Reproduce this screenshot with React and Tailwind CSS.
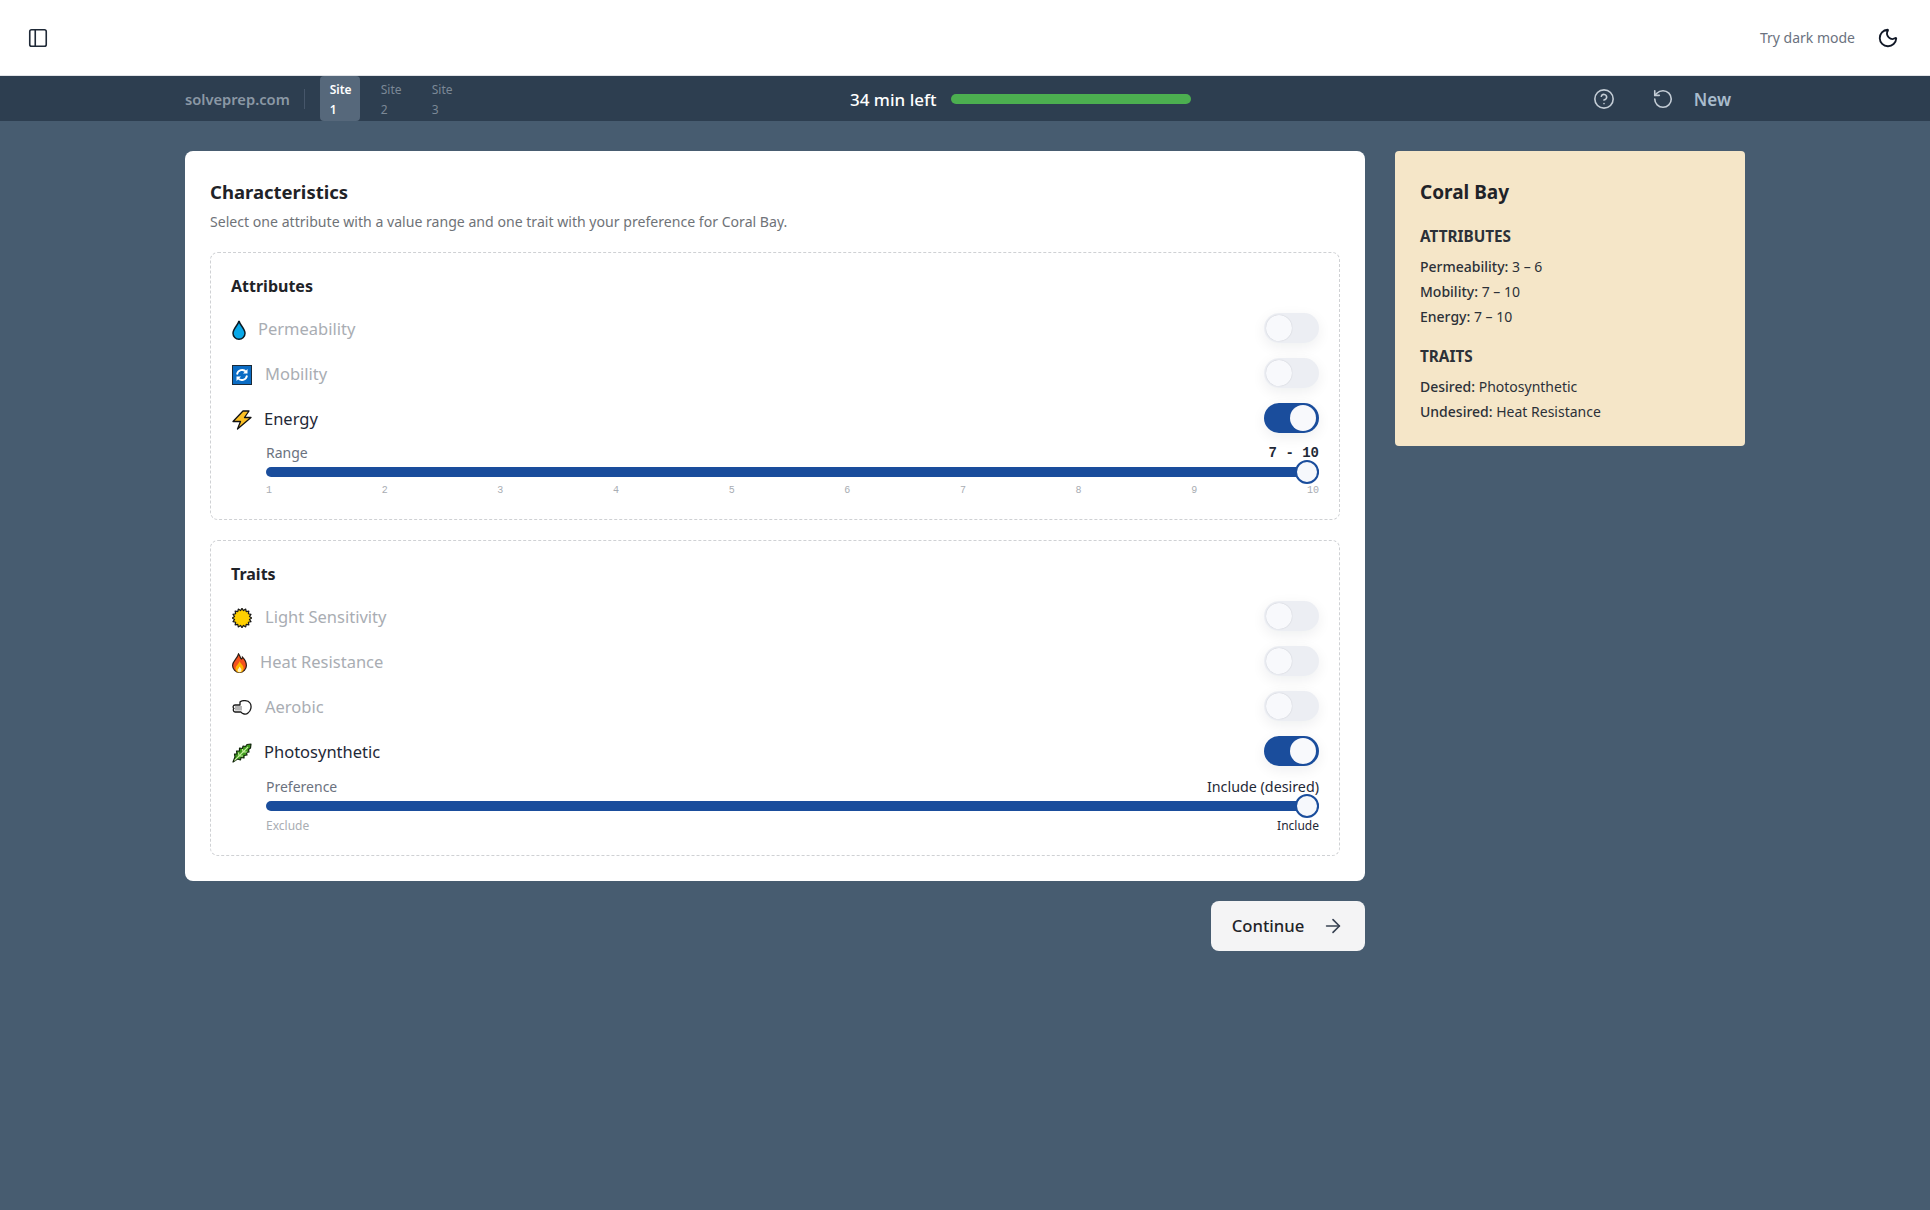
import { ArrowRight, CircleHelp, Moon, PanelLeft, RotateCcw } from "lucide-react";

const FONT = "font-['Noto_Sans','Open_Sans',sans-serif]";

const sunPoints = Array.from({ length: 32 }, (_, i) => {
  const r = i % 2 === 0 ? 9.7 : 7.6;
  const a = (i * Math.PI) / 16;
  return `${(10 + r * Math.sin(a)).toFixed(2)},${(10 - r * Math.cos(a)).toFixed(2)}`;
}).join(" ");

const Drop = () => (
  <svg viewBox="0 0 14 20" className="h-5 w-[14px] shrink-0">
    <path d="M7 1 C8 5 13 9 13 13.2 A6 6 0 0 1 1 13.2 C1 9 6 5 7 1 Z" fill="#08a8e8" stroke="#0b1a24" strokeWidth="1.5" />
  </svg>
);

const Cycle = () => (
  <svg viewBox="0 0 20 20" className="h-5 w-5 shrink-0">
    <rect x="0.5" y="0.5" width="19" height="19" fill="#0a6cc4" stroke="#1b2a38" />
    <path d="M5 9.5 A5.2 5.2 0 0 1 14.2 7" fill="none" stroke="#fff" strokeWidth="1.8" />
    <path d="M15 10.5 A5.2 5.2 0 0 1 5.8 13" fill="none" stroke="#fff" strokeWidth="1.8" />
    <path d="M15.5 4 V8.5 H11 Z M4.5 16 V11.5 H9 Z" fill="#fff" />
  </svg>
);

const Bolt = () => (
  <svg viewBox="0 0 20 20" className="h-5 w-5 shrink-0">
    <path d="M11 1 H17 L12.5 7.5 H19 L5.5 19 L8.5 11.5 H1 Z" fill="#fbbf24" stroke="#111" strokeWidth="1.3" strokeLinejoin="round" />
  </svg>
);

const Sun = () => (
  <svg viewBox="0 0 20 20" className="h-5 w-5 shrink-0">
    <polygon points={sunPoints} fill="#ffd000" stroke="#1a1a1a" strokeWidth="1.2" strokeLinejoin="round" />
  </svg>
);

const Flame = () => (
  <svg viewBox="0.4 0 15.2 20" className="h-5 w-[15px] shrink-0">
    <path d="M7 0.8 C9 3 8.5 5 10 6 C11 5.5 11 4.5 11 4 C14 7 15 9.5 15 12.5 A7 7 0 0 1 1 12.5 C1 8 6 5.5 7 0.8 Z" fill="#f4511e" stroke="#2a1a12" strokeWidth="1.2" />
    <path d="M8 8 C9 11 12.5 12.5 12 15.5 A4 4 0 0 1 4 15.5 C4 13 7.5 11 8 8 Z" fill="#ffb300" />
    <path d="M8 13.5 C9 15 10.3 16 10 17.3 A2 2 0 0 1 6 17.3 C6 16 7.6 15.5 8 13.5 Z" fill="#fff3c4" />
  </svg>
);

const Air = () => (
  <svg viewBox="0 0 20 15" className="h-[15px] w-5 shrink-0">
    <path d="M8 2 C10 0 16 0 18 3 C20 6 19 11 16 13 C14 15 10 14 9 12 L3 12 C1 12 1 9 2 8.5 C0.5 7.5 1 5 3 5 L8 5 Z" fill="#fff" stroke="#1a1a1a" strokeWidth="1.3" strokeLinejoin="round" />
    <rect x="3" y="6" width="7" height="4.5" fill="#b5b5b5" />
  </svg>
);

const Leaf = () => (
  <svg viewBox="0 0 20 20" className="h-5 w-5 shrink-0">
    <path d="M1 19 L3 14 L2.5 11 L5 11 L4.5 8 L7.5 8 L7.5 5 L10.5 5.5 L11 3 L13.5 3.5 L15 1.5 L19 1 L18.5 5 L16.5 6.5 L17 9 L14.5 9.5 L15 12 L12 12.5 L12 15 L9 14.5 L8.5 17 L5.5 16 Z" fill="#3f9b1e" stroke="#10240a" strokeWidth="1.2" strokeLinejoin="round" />
    <path d="M2.5 17.5 L16 4 M7 13 L6.5 9.5 M7 13 L11 13 M11 9 L10.5 6 M11 9 L15 9" fill="none" stroke="#c6ef9e" strokeWidth="1.1" />
  </svg>
);

const Toggle = ({ on }) => (
  <div
    className={`mb-[3px] flex h-[30px] w-[55px] items-center rounded-full shadow-[0_4px_14px_rgba(15,23,42,0.07)] ${
      on ? "justify-end bg-[#1a4d9c] pr-[3px]" : "justify-start bg-[#eceef3] pl-[2px]"
    }`}
  >
    <div className={`h-[26px] w-[26px] rounded-full bg-[#f8f9fc] ${on ? "" : "shadow-[0_0_1px_rgba(15,23,42,0.25)]"}`} />
  </div>
);

const Row = ({ icon, label, on, gap }) => (
  <div className="flex h-[45px] items-center justify-between">
    <div className={`flex items-center ${gap}`}>
      {icon}
      <span className={`text-[16.5px] ${on ? "text-[#1f2937]" : "text-[#a9adb3]"}`}>{label}</span>
    </div>
    <Toggle on={on} />
  </div>
);

const Track = () => (
  <div className="relative h-[10px] rounded-full bg-[#1a4d9c]">
    <div className="absolute right-0 top-1/2 h-6 w-6 -translate-y-1/2 rounded-full border-2 border-[#1a4d9c] bg-[#f6f8fc]" />
  </div>
);

const RangeSlider = () => (
  <div className="mt-px ml-[34px]">
    <div className="flex h-[19px] items-center justify-between">
      <span className="text-sm text-[#6b7280]">Range</span>
      <span className="font-['Liberation_Mono',monospace] text-sm font-bold text-[#1f2937]">7 - 10</span>
    </div>
    <div className="mt-[5px]">
      <Track />
    </div>
    <div className="mt-[7px] flex justify-between font-['Liberation_Mono',monospace] text-[10px] leading-[14px] text-[#a9adb3]">
      {[1, 2, 3, 4, 5, 6, 7, 8, 9, 10].map((n) => (
        <span key={n}>{n}</span>
      ))}
    </div>
  </div>
);

const PrefSlider = () => (
  <div className="mt-[2px] ml-[34px]">
    <div className="flex h-[19px] items-center justify-between">
      <span className="text-sm text-[#6b7280]">Preference</span>
      <span className="text-[14.3px] text-[#1f2937]">Include (desired)</span>
    </div>
    <div className="mt-[5px]">
      <Track />
    </div>
    <div className="mt-[7px] flex justify-between text-xs leading-[16px]">
      <span className="text-[#a9adb3]">Exclude</span>
      <span className="text-[#1f2937]">Include</span>
    </div>
  </div>
);

const Section = ({ title, children, className }) => (
  <section className={`rounded-lg border border-dashed border-[#cfd1d4] pt-[21px] pr-5 pl-[21px] ${className}`}>
    <h3 className="mb-[9px] -ml-px text-base leading-6 font-bold text-[#1f2328]">{title}</h3>
    {children}
  </section>
);

const App = () => (
  <div className={`min-h-[1210px] bg-[#475c70] ${FONT}`}>
    {/* top bar */}
    <header className="flex h-[76px] items-center justify-between border-b border-[#e2e4e8] bg-white pr-[31px] pl-[27px]">
      <PanelLeft className="h-[22px] w-[22px] text-[#1f2937]" strokeWidth={1.75} />
      <div className="flex items-center gap-[22px]">
        <span className="text-sm text-[#6b7280]">Try dark mode</span>
        <Moon className="h-[22px] w-[22px] text-[#111827]" strokeWidth={2} />
      </div>
    </header>

    {/* exam bar */}
    <div className="flex h-[45px] items-center bg-[#2d3e50] pr-[199px] pl-[185px]">
      <div className="flex h-full w-[665px] items-center">
        <span className="pt-[2px] text-[14.7px] font-semibold text-[#8b98a5]">solveprep.com</span>
        <div className="mr-[15px] ml-[14px] h-5 w-px bg-[#46566a]" />
        <div className="flex h-full items-center gap-[11px] text-xs">
          <div className="flex h-full w-10 flex-col justify-center rounded bg-[#56687b] pt-[3px] pl-[10px] leading-5 font-semibold text-white">
            <span>Site</span>
            <span>1</span>
          </div>
          <div className="flex w-10 flex-col pt-[3px] pl-[10px] leading-5 text-[#7b8896]">
            <span>Site</span>
            <span>2</span>
          </div>
          <div className="flex w-10 flex-col pt-[3px] pl-[10px] leading-5 text-[#7b8896]">
            <span>Site</span>
            <span>3</span>
          </div>
        </div>
      </div>
      <div className="flex items-center gap-[14px]">
        <span className="pt-[2px] text-[17px] font-medium text-white">34 min left</span>
        <div className="h-[10px] w-[240px] rounded-full bg-[#4caf50]" />
      </div>
      <div className="ml-auto flex items-center">
        <CircleHelp className="h-[22px] w-[22px] text-[#c3ccd5]" strokeWidth={1.75} />
        <RotateCcw className="ml-[37px] h-[22px] w-[22px] text-[#c3ccd5]" strokeWidth={1.75} />
        <span className="ml-[20px] pt-[2px] text-[17px] font-semibold text-[#a9bccd]">New</span>
      </div>
    </div>

    <main className="flex items-start gap-[30px] pt-[30px] pl-[185px]">
      <div className="w-[1180px]">
        <div className="rounded-lg bg-white px-[25px] pt-[29px] pb-[25px]">
          <h2 className="text-[18.5px] leading-6 font-bold text-[#1f2328]">Characteristics</h2>
          <p className="mt-[8px] text-[14.1px] leading-5 text-[#6f7378]">
            Select one attribute with a value range and one trait with your preference for Coral Bay.
          </p>
          <Section title="Attributes" className="mt-5 h-[268px]">
            <Row icon={<Drop />} label="Permeability" gap="gap-[12px]" />
            <Row icon={<Cycle />} label="Mobility" gap="gap-[13px]" />
            <Row icon={<Bolt />} label="Energy" on gap="gap-[12px]" />
            <RangeSlider />
          </Section>
          <Section title="Traits" className="mt-5 h-[316px]">
            <Row icon={<Sun />} label="Light Sensitivity" gap="gap-[13px]" />
            <Row icon={<Flame />} label="Heat Resistance" gap="gap-[13px]" />
            <Row icon={<Air />} label="Aerobic" gap="gap-[13px]" />
            <Row icon={<Leaf />} label="Photosynthetic" on gap="gap-[12px]" />
            <PrefSlider />
          </Section>
        </div>
        <div className="mt-5 flex justify-end">
          <button className="flex h-[50px] w-[154px] items-center justify-center gap-[18px] rounded-lg bg-[#f4f4f5] text-[16.7px] font-medium text-[#1f2328]">
            Continue
            <ArrowRight className="h-[22px] w-[22px] text-[#374151]" strokeWidth={1.75} />
          </button>
        </div>
      </div>

      <aside className="h-[295px] w-[350px] rounded bg-[#f5e6c8] px-[25px] pt-[26px] text-sm leading-[25px] text-[#2c3138]">
        <h2 className="text-[19px] leading-[30px] font-bold text-[#1f2328]">Coral Bay</h2>
        <h4 className="mt-[17px] mb-[5px] text-[15.3px] font-bold">ATTRIBUTES</h4>
        <p><span className="font-medium">Permeability:</span> 3 – 6</p>
        <p><span className="font-medium">Mobility:</span> 7 – 10</p>
        <p><span className="font-medium">Energy:</span> 7 – 10</p>
        <h4 className="mt-[15px] mb-[5px] text-[15.3px] font-bold">TRAITS</h4>
        <p><span className="font-medium">Desired:</span> Photosynthetic</p>
        <p><span className="font-medium">Undesired:</span> Heat Resistance</p>
      </aside>
    </main>
  </div>
);

export default App;
